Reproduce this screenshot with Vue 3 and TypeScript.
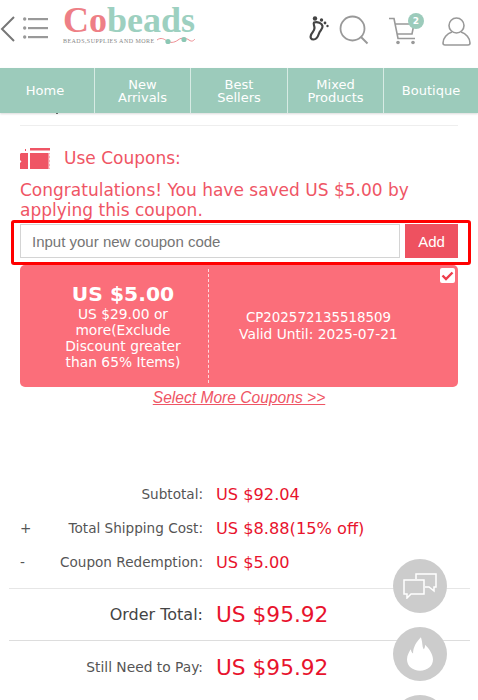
<script setup lang="ts">
const navItems = [
  ['Home'],
  ['New', 'Arrivals'],
  ['Best', 'Sellers'],
  ['Mixed', 'Products'],
  ['Boutique'],
]

const summary = [
  { sign: '', label: 'Subtotal:', value: 'US $92.04' },
  { sign: '+', label: 'Total Shipping Cost:', value: 'US $8.88(15% off)' },
  { sign: '-', label: 'Coupon Redemption:', value: 'US $5.00' },
]
</script>

<template>
  <div class="page">
    <header class="topbar">
      <div class="top-left">
        <svg class="back" width="15" height="26" viewBox="0 0 15 26">
          <path d="M14 1 2 13 14 25" fill="none" stroke="#777" stroke-width="2" />
        </svg>
        <svg class="menu" width="25" height="22" viewBox="0 0 25 22">
          <g fill="#999">
            <circle cx="1.700" cy="2" r="1.700" />
            <circle cx="1.700" cy="11" r="1.700" />
            <circle cx="1.700" cy="20" r="1.700" />
            <rect x="5" y="1" width="20" height="2.200" />
            <rect x="5" y="10" width="20" height="2.200" />
            <rect x="5" y="19" width="20" height="2.200" />
          </g>
        </svg>
        <div class="logo">
          <div class="logo-word"><span class="co">Co</span><span class="beads">beads</span></div>
          <div class="logo-sub">
            <span>BEADS,SUPPLIES AND MORE</span>
            <svg width="40" height="9" viewBox="0 0 40 9">
              <path d="M1 4c4-3 7-1 10 1s7 2 11-1 8-2 11 0 4 1 6-1" fill="none" stroke="#ee8d93" stroke-width="1" />
              <circle cx="12" cy="5.500" r="2.600" fill="#8cc7b4" />
              <circle cx="28" cy="3.500" r="2.600" fill="#8cc7b4" />
            </svg>
          </div>
        </div>
      </div>
      <div class="top-right">
        <svg class="foot" width="20" height="26" viewBox="0 0 20 26">
          <path d="M5 6.500c3.500-1 8 .5 8.500 3.500.5 3-2.500 4.500-3.500 7.500-1 3-3 6-5.500 6S1 21.500 2 19c1-2.500 3.500-4 3.500-7 0-2-1.500-4.500-.5-5.500Z" fill="none" stroke="#444" stroke-width="2.200" />
          <g fill="#444">
            <circle cx="6" cy="2.500" r="2.200" />
            <circle cx="12.500" cy="4" r="1.700" />
            <circle cx="16" cy="7" r="1.400" />
            <circle cx="18.500" cy="10" r="1.200" />
          </g>
        </svg>
        <svg class="search" width="30" height="30" viewBox="0 0 30 30">
          <circle cx="13.500" cy="13.500" r="12" fill="none" stroke="#999" stroke-width="1.800" />
          <path d="M22 22 28.500 28.500" stroke="#999" stroke-width="2" />
        </svg>
        <div class="cart">
          <svg width="28" height="28" viewBox="0 0 28 28">
            <path d="M0 1.500h5l4 20h17M6 7h19l-2 10H8" fill="none" stroke="#999" stroke-width="1.600" />
            <circle cx="9" cy="25.500" r="1.800" fill="#999" />
            <circle cx="24" cy="25.500" r="1.800" fill="#999" />
          </svg>
          <span class="badge">2</span>
        </div>
        <svg class="user" width="29" height="29" viewBox="0 0 29 29">
          <circle cx="14.500" cy="8.500" r="7.500" fill="none" stroke="#999" stroke-width="1.600" />
          <path d="M10 15C5 16.500 1 21 1 26c0 1 .5 2 2 2h23c1.500 0 2-1 2-2 0-5-4-9.500-9-11" fill="none" stroke="#999" stroke-width="1.600" />
        </svg>
      </div>
    </header>

    <nav class="nav">
      <a v-for="item in navItems" :key="item[0]" class="nav-item">
        <span v-for="line in item" :key="line">{{ line }}</span>
      </a>
    </nav>
    <i class="nav-speck"></i>

    <main class="content">
      <section class="coupons">
        <h2 class="coupon-title">
          <svg width="31" height="21" viewBox="0 0 31 21">
            <g fill="#ef5565">
              <path d="M1 5h7v16H0v-6l1.500-1.500L0 12V6Z" />
              <path d="M5 3V1h1v2ZM10 0h20v2.500H10Z" />
              <path d="M10 5h18v16H10Z" />
              <path d="M28 5h2l-1 2 1 2-1 2 1 2-1 2 1 2-1 2 1 2h-2Z" opacity=".6" />
            </g>
          </svg>
          <span>Use Coupons:</span>
        </h2>
        <p class="saved">Congratulations! You have saved US $5.00 by applying this coupon.</p>
        <div class="code-box">
          <input class="code-input" placeholder="Input your new coupon code" />
          <button type="button" class="code-add">Add</button>
        </div>
        <div class="ticket">
          <div class="ticket-left">
            <strong>US $5.00</strong>
            <span>US $29.00 or more(Exclude Discount greater than 65% Items)</span>
          </div>
          <div class="ticket-right">
            <span class="ticket-code">CP202572135518509</span>
            <span>Valid Until: 2025-07-21</span>
          </div>
          <span class="check">
            <svg width="13" height="10" viewBox="0 0 13 10">
              <path d="M1.500 4.500 5 8 11.500 1.500" fill="none" stroke="#ee3d4b" stroke-width="2.400" />
            </svg>
          </span>
        </div>
        <a class="select-more">Select More Coupons &gt;&gt;</a>
      </section>

      <section class="summary">
        <div v-for="row in summary" :key="row.label" class="row">
          <span class="sign">{{ row.sign }}</span>
          <span class="label">{{ row.label }}</span>
          <span class="value">{{ row.value }}</span>
        </div>
        <div class="row total">
          <span class="sign"></span>
          <span class="label">Order Total:</span>
          <span class="value">US $95.92</span>
        </div>
        <div class="row pay">
          <span class="sign"></span>
          <span class="label">Still Need to Pay:</span>
          <span class="value">US $95.92</span>
        </div>
      </section>
    </main>

    <div class="floats">
      <div class="float-btn">
        <svg width="34" height="26" viewBox="0 0 34 26">
          <path d="M13 6V1h20v13h-2v4l-5-4h-4" fill="none" stroke="#fff" stroke-width="1.500" />
          <path d="M1 7h20v14H8l-4 4v-4H1Z" fill="#ccc" stroke="#fff" stroke-width="1.500" />
        </svg>
      </div>
      <div class="float-btn">
        <svg width="26" height="36" viewBox="0 0 28 36">
          <path d="M15 0c2 6 1 9 3 13 1-1 1.500-3 1.500-5 4 4 8.500 10 8.500 16 0 7-6 12-14 12S0 31 0 24c0-5 2.500-8 4-11 .5 2 1 3.500 2.500 4.500C6.500 11 10 5 15 0Z" fill="#fff" />
        </svg>
      </div>
      <div class="float-btn"></div>
    </div>
  </div>
</template>

<style>
html,
body {
  margin: 0;
  overflow: hidden;
}
</style>

<style scoped>
.page {
  position: relative;
  width: 478px;
  height: 700px;
  overflow: hidden;
  background: #fff;
  font-family: 'DejaVu Sans', Verdana, sans-serif;
}

.topbar {
  display: flex;
  justify-content: space-between;
  height: 68px;
  box-sizing: border-box;
}

.top-left {
  display: flex;
  align-items: flex-start;
}

.back {
  margin: 16px 0 0 0;
}

.menu {
  margin: 17px 0 0 8px;
}

.logo {
  margin: 2px 0 0 15px;
}

.logo-word {
  font-family: 'Liberation Serif', serif;
  font-weight: 700;
  font-size: 36px;
  line-height: 36px;
}

.co {
  color: #ee7f86;
}

.beads {
  color: #9dd0c0;
}

.logo-sub {
  display: flex;
  align-items: center;
  gap: 1px;
  margin-top: -2px;
  font-family: 'Liberation Serif', serif;
  font-size: 6px;
  letter-spacing: 0.450px;
  color: #888;
  white-space: nowrap;
}

.top-right {
  display: flex;
  align-items: flex-start;
  padding-top: 15px;
}

.foot {
  margin: 1px 0 0 0;
}

.search {
  margin: 0 0 0 10px;
}

.cart {
  position: relative;
  margin: 2px 0 0 20px;
  height: 28px;
}

.badge {
  position: absolute;
  left: 19px;
  top: -4px;
  width: 16px;
  height: 16px;
  border-radius: 50%;
  background: #9ccbbb;
  color: #fff;
  font-size: 9px;
  font-weight: 700;
  line-height: 16px;
  text-align: center;
}

.user {
  margin: 2px 7px 0 25px;
}

.nav {
  display: grid;
  grid-template-columns: 95px 96px 97px 96px 94px;
  height: 45px;
  background: #9ccbbb;
  box-shadow: 0 1px 2px rgba(0, 0, 0, 0.15);
}

.nav-item {
  display: flex;
  flex-direction: column;
  align-items: center;
  justify-content: center;
  border-right: 1px solid #d7ebe4;
  color: #fff;
  font-size: 13px;
  line-height: 13px;
}

.nav-item:first-child {
  padding-right: 4px;
}

.nav-item:last-child {
  border-right: 0;
}

.nav-speck {
  position: absolute;
  left: 56px;
  top: 113px;
  width: 2px;
  height: 1px;
  background: #666;
}

.coupons {
  margin: 12px 20px 0;
  padding-top: 20px;
  border-top: 1px solid #eee;
}

.coupon-title {
  display: flex;
  align-items: center;
  gap: 13px;
  margin: 0;
  height: 24px;
  color: #ef5565;
  font-size: 17px;
  font-weight: 400;
}

.saved {
  margin: 10px 0 0;
  color: #ef5565;
  font-size: 17px;
  line-height: 20px;
}

.code-box {
  display: flex;
  gap: 5px;
  margin: 0 -13px 0 -9px;
  padding: 1px 10px 4px 6px;
  border: 3px solid #f00;
  border-radius: 3px;
}

.code-input {
  flex: 1;
  min-width: 0;
  box-sizing: border-box;
  height: 34px;
  padding: 0 11px;
  border: 1px solid #d4d4d4;
  outline: none;
  font-family: 'Liberation Sans', Arial, sans-serif;
  font-size: 15px;
}

.code-input::placeholder {
  color: #757575;
  opacity: 1;
}

.code-add {
  width: 53px;
  height: 34px;
  border: 0;
  padding: 0;
  background: #ee5160;
  color: #fff;
  font-family: 'Liberation Sans', Arial, sans-serif;
  font-size: 15px;
}

.ticket {
  position: relative;
  display: flex;
  height: 122px;
  border-radius: 5px;
  background: #fb6e7a;
  color: #fff;
}

.ticket-left {
  display: flex;
  flex-direction: column;
  align-items: center;
  justify-content: center;
  width: 189px;
  margin: 4px 0;
  padding: 0 12px 0 30px;
  box-sizing: border-box;
  border-right: 1px dashed #ffd9dc;
  font-size: 13.800px;
  line-height: 16px;
  text-align: center;
}

.ticket-left strong {
  font-size: 20.300px;
  line-height: 24px;
}

.ticket-right {
  flex: 1;
  display: flex;
  flex-direction: column;
  align-items: center;
  justify-content: center;
  padding-right: 30px;
  font-size: 13.800px;
  line-height: 16px;
}

.ticket-code {
  font-size: 13.400px;
}

.check {
  position: absolute;
  right: 3px;
  top: 3px;
  display: flex;
  align-items: center;
  justify-content: center;
  width: 15px;
  height: 15px;
  border-radius: 2px;
  background: #fff;
}

.select-more {
  display: block;
  margin-top: 1px;
  color: #ef5565;
  font-family: 'Liberation Sans', Arial, sans-serif;
  font-size: 15.600px;
  font-style: italic;
  line-height: 20px;
  text-align: center;
  text-decoration: underline;
}

.summary {
  margin: 69px 8px 0 9px;
}

.row {
  display: flex;
  align-items: center;
  height: 34px;
  color: #555;
  font-size: 13.600px;
}

.sign {
  width: 32px;
  padding-left: 11px;
  box-sizing: border-box;
  flex: none;
}

.label {
  width: 162px;
  flex: none;
  text-align: right;
}

.value {
  margin-left: 13px;
  color: #e8132d;
  font-size: 16.200px;
}

.total {
  height: 53px;
  margin-top: 9px;
  box-sizing: border-box;
  border-top: 1px solid #e6e6e6;
  border-bottom: 1px solid #ddd;
  color: #444;
  font-size: 16px;
}

.total .value,
.pay .value {
  font-size: 21.700px;
}

.pay {
  height: 52px;
  font-size: 13.800px;
}

.floats {
  position: absolute;
  left: 393px;
  top: 559px;
  display: flex;
  flex-direction: column;
  gap: 14px;
}

.float-btn {
  display: flex;
  align-items: center;
  justify-content: center;
  width: 54px;
  height: 54px;
  border-radius: 50%;
  background: #ccc;
}
</style>
